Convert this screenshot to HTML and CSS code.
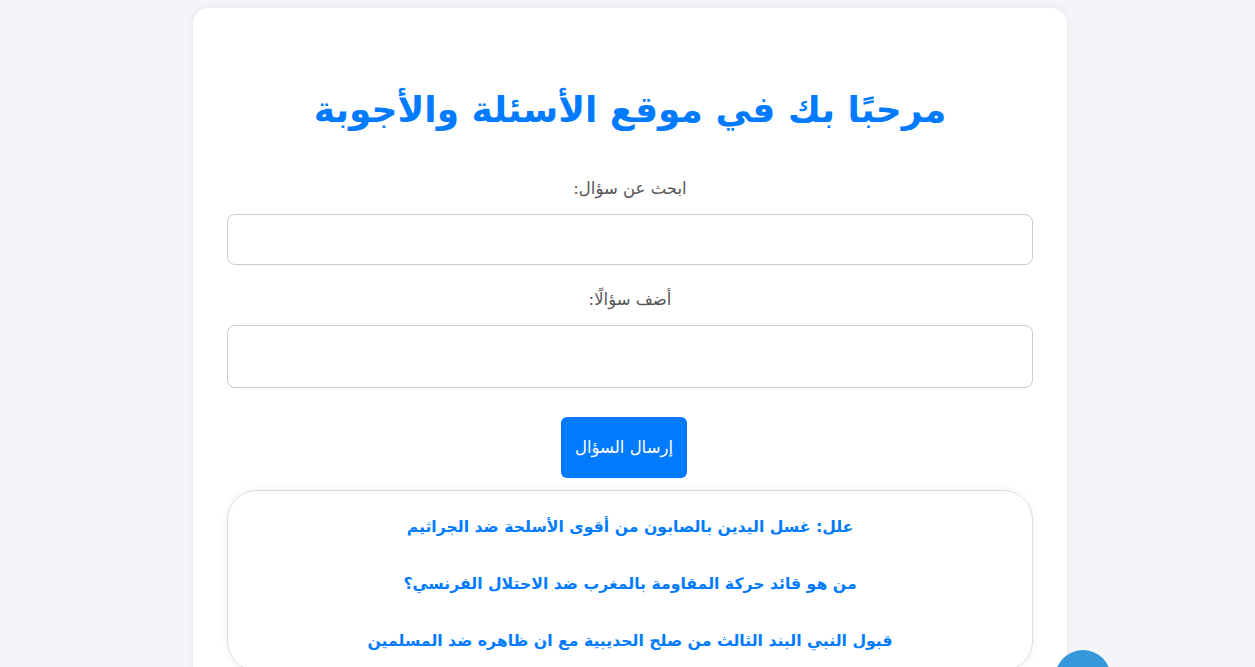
FILE: index.html
```html
<!DOCTYPE html>
<html lang="ar" dir="rtl">
<head>
<meta charset="utf-8">
<title>موقع الأسئلة والأجوبة</title>
<link rel="stylesheet" href="styles.css">
</head>
<body>
<main class="card">
  <h1 class="title">مرحبًا بك في موقع الأسئلة والأجوبة</h1>
  <label class="label" for="search">ابحث عن سؤال:</label>
  <input class="field" id="search" type="text">
  <label class="label" for="ask">أضف سؤالًا:</label>
  <textarea class="field area" id="ask"></textarea>
  <button class="send" type="button">إرسال السؤال</button>
  <section class="questions">
    <a class="q" href="#">علل: غسل اليدين بالصابون من أقوى الأسلحة ضد الجراثيم</a>
    <a class="q" href="#">من هو قائد حركة المقاومة بالمغرب ضد الاحتلال الفرنسي؟</a>
    <a class="q" href="#">قبول النبي البند الثالث من صلح الحديبية مع ان ظاهره ضد المسلمين</a>
  </section>
</main>
<div class="fab"></div>
</body>
</html>
```
FILE: styles.css
```css
html, body { margin: 0; padding: 0; }
body {
  background: #f4f5f8;
  font-family: "DejaVu Sans", sans-serif;
  padding: 8px 0 0 5px;
  min-height: 100vh;
  box-sizing: border-box;
}
.card {
  width: 874px;
  box-sizing: border-box;
  margin: 0 auto;
  background: #fff;
  border-radius: 16px;
  box-shadow: 0 0 10px rgba(0,0,0,0.06);
  padding: 74px 34px 40px;
  display: flex;
  flex-direction: column;
  align-items: center;
}
.title {
  margin: 0;
  color: #007bff;
  font-size: 36px;
  font-weight: bold;
  line-height: 56px;
}
.label {
  color: #555;
  font-size: 16.5px;
  margin-top: 38px;
  line-height: 26px;
}
.label + .field { margin-top: 12px; }
.field {
  width: 100%;
  box-sizing: border-box;
  height: 51px;
  border: 1px solid #ccc;
  border-radius: 8px;
  font: inherit;
  padding: 10px;
  background: #fff;
}
.area { height: 63px; resize: none; display: block; }
.label:nth-of-type(2) { margin-top: 22px; }
.send {
  margin: 29px 0 0 0;
  margin-right: 12px;
  width: 126px;
  height: 61px;
  border: 0;
  border-radius: 6px;
  background: #007bff;
  color: #fff;
  font: inherit;
  font-size: 16.5px;
}
.questions {
  margin-top: 12px;
  width: 100%;
  box-sizing: border-box;
  border: 1px solid #ddd;
  border-radius: 30px;
  box-shadow: 0 0 8px rgba(0,0,0,0.06);
  padding: 21px 20px 14px;
  display: flex;
  flex-direction: column;
  align-items: center;
  gap: 27px;
}
.q {
  color: #007bff;
  text-decoration: none;
  font-weight: bold;
  font-size: 15.7px;
  line-height: 30px;
}
.fab {
  position: fixed;
  left: 1055px;
  top: 650px;
  width: 56px;
  height: 56px;
  border-radius: 50%;
  background: #3498db;
}
```
